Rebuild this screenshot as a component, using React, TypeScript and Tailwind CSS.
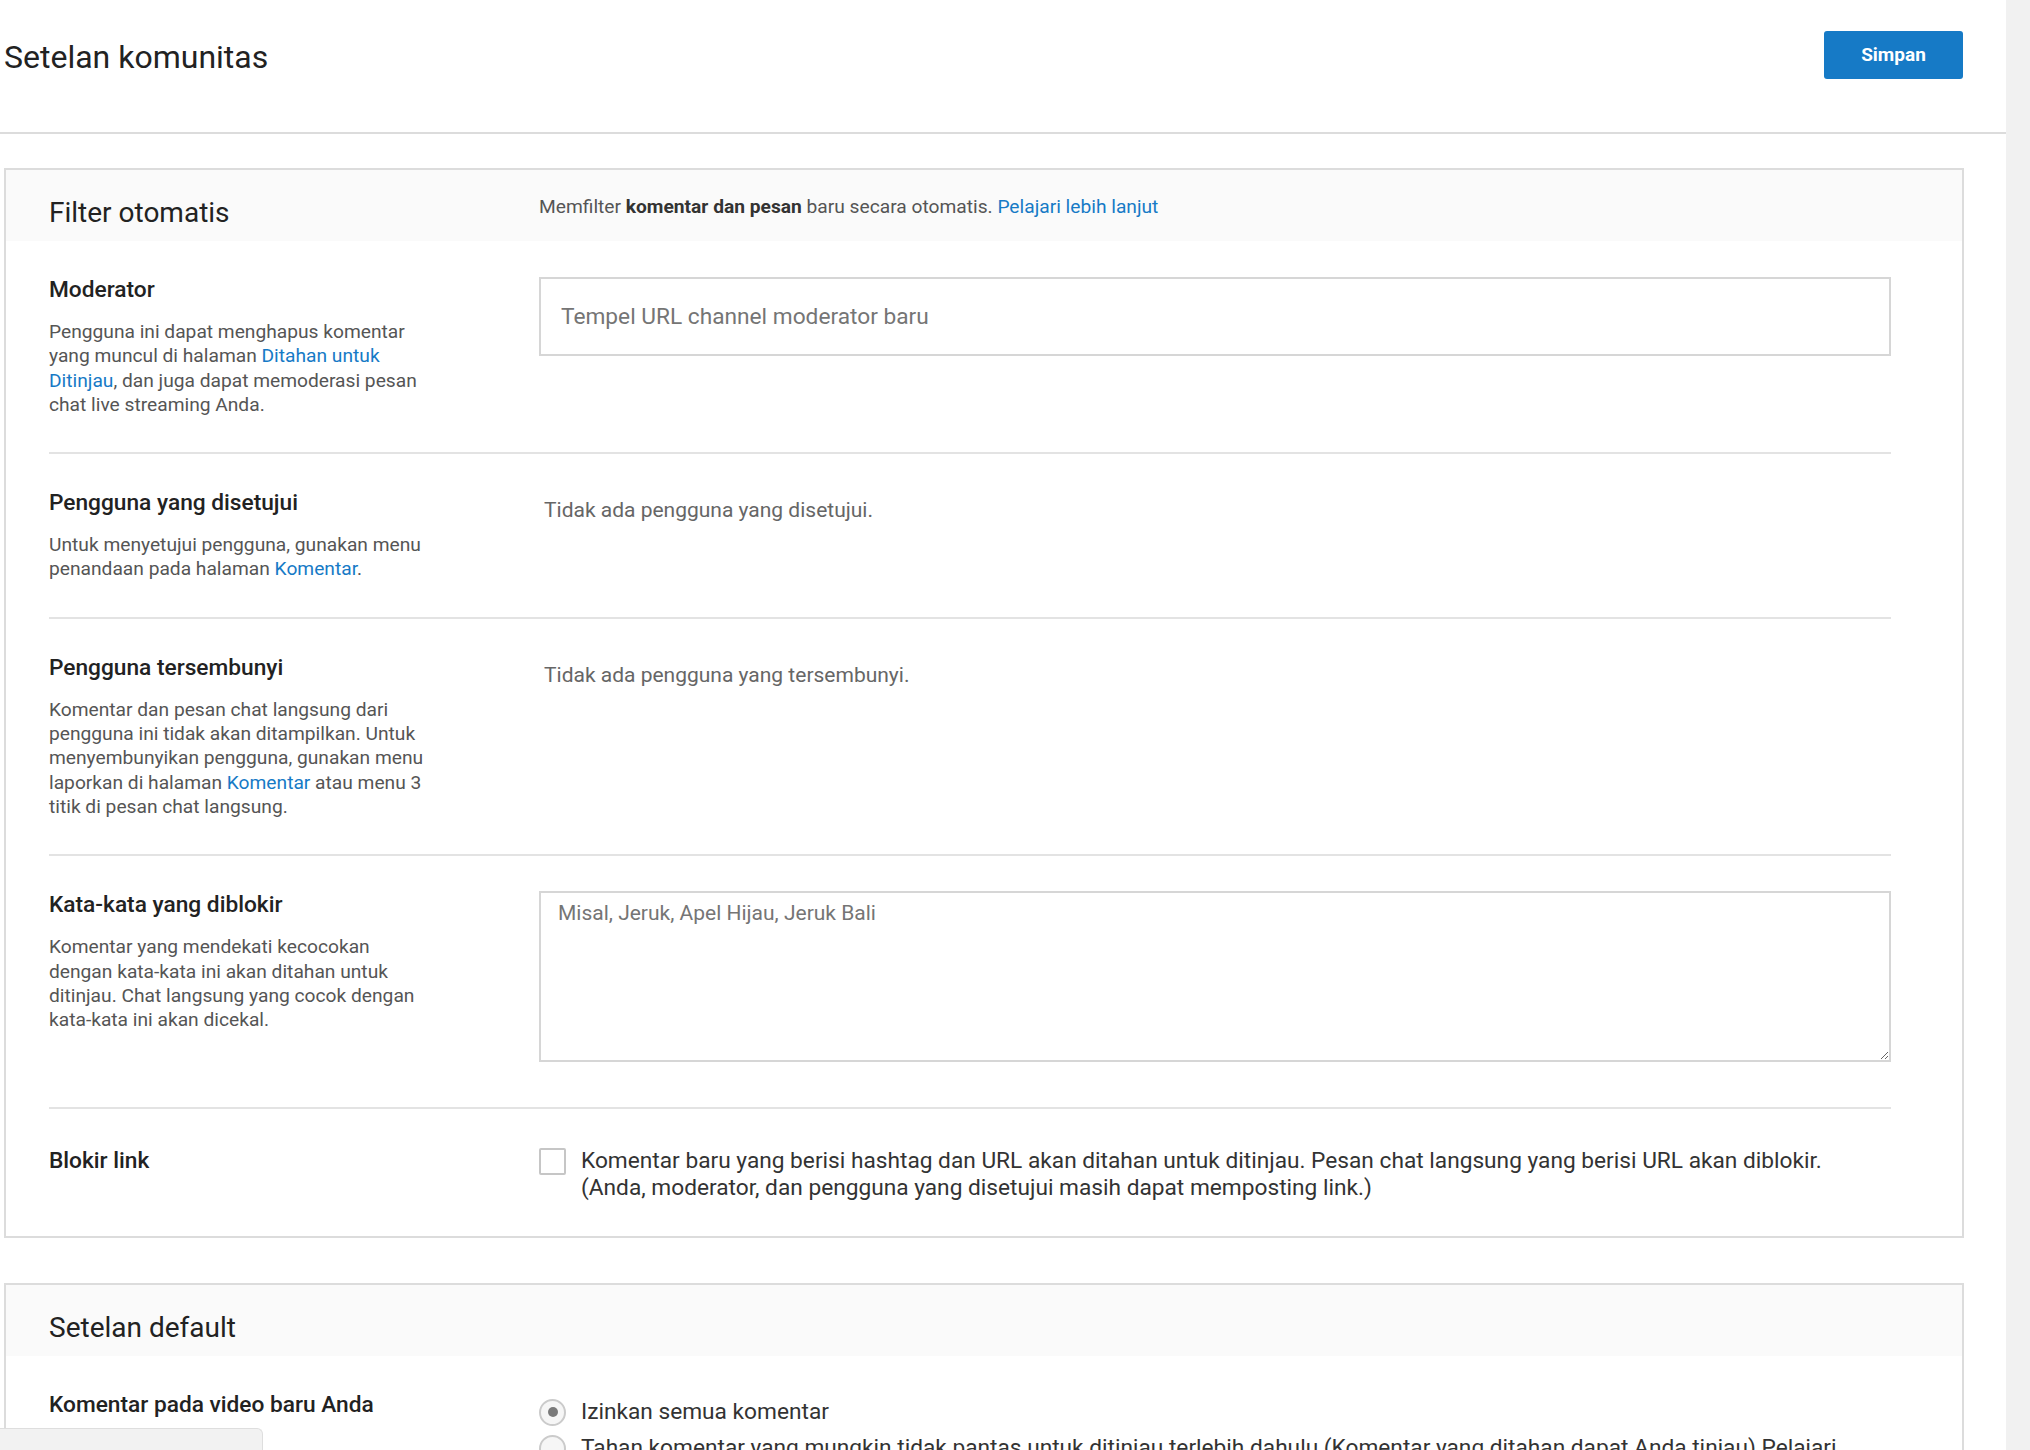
import type { ReactNode } from 'react';
import clsx from 'clsx';

type SettingRowProps = {
  label: string;
  description?: ReactNode;
  children?: ReactNode;
  last?: boolean;
};

function TextLink({ children }: { children: ReactNode }) {
  return (
    <a className="text-[#167ac6]" href="#">
      {children}
    </a>
  );
}

function SettingRow({ label, description, children, last }: SettingRowProps) {
  return (
    <div
      className={clsx(
        'flex pb-[35px]',
        last ? 'pt-[38px]' : 'border-b-2 border-[#e3e3e3] pt-[35px]',
      )}
    >
      <div className="w-[490px] shrink-0">
        <h3 className="text-[22.7px] font-medium leading-[28px] text-[#222]">
          {label}
        </h3>
        {description ? (
          <p className="mt-4 w-[386px] text-[19.2px] leading-[24.3px] text-[#555]">
            {description}
          </p>
        ) : null}
      </div>
      <div className="min-w-0 flex-1">{children}</div>
    </div>
  );
}

function Card({
  title,
  note,
  children,
  className,
}: {
  title: string;
  note?: ReactNode;
  children: ReactNode;
  className?: string;
}) {
  return (
    <section className={clsx('w-[1960px] border-2 border-[#dcdcdc]', className)}>
      <div className="flex h-[71px] items-start bg-[#fafafa] pl-[43px] pt-[25px]">
        <h2 className="mt-[2px] w-[490px] shrink-0 text-[28px] leading-[32px] text-[#222]">
          {title}
        </h2>
        {note}
      </div>
      <div className="pl-[43px] pr-[71px]">{children}</div>
    </section>
  );
}

function Radio({ checked, children }: { checked?: boolean; children: ReactNode }) {
  return (
    <label className="flex items-center gap-[15px]">
      <span className="flex size-[27px] shrink-0 items-center justify-center rounded-full border-2 border-[#cbcbcb] bg-[#f6f6f6]">
        {checked ? <span className="size-[10px] rounded-full bg-[#7a7a7a]" /> : null}
      </span>
      <span className="whitespace-nowrap text-[22.7px] leading-[28px] text-[#333]">
        {children}
      </span>
    </label>
  );
}

export default function App() {
  return (
    <div className="flex h-screen overflow-hidden bg-white font-['Roboto','Liberation_Sans',sans-serif]">
      <main className="min-w-0 flex-1 overflow-hidden">
        <header className="flex h-[134px] items-start justify-between border-b-2 border-[#dcdcdc] pl-1 pr-[43px]">
          <h1 className="mt-[38px] text-[32px] leading-[38px] text-[#222]">
            Setelan komunitas
          </h1>
          <button
            className="mt-[31px] h-[48px] w-[139px] rounded-[3px] bg-[#167ac6] text-[19px] font-bold text-white"
            type="button"
          >
            Simpan
          </button>
        </header>

        <div className="pl-1">
          <Card
            className="mt-[34px]"
            note={
              <p className="text-[19.2px] leading-[24px] text-[#555]">
                Memfilter <b className="font-bold text-[#333]">komentar dan pesan</b>{' '}
                baru secara otomatis. <TextLink>Pelajari lebih lanjut</TextLink>
              </p>
            }
            title="Filter otomatis"
          >
            <SettingRow
              description={
                <>
                  Pengguna ini dapat menghapus komentar yang muncul di halaman{' '}
                  <TextLink>Ditahan untuk Ditinjau</TextLink>, dan juga dapat
                  memoderasi pesan chat live streaming Anda.
                </>
              }
              label="Moderator"
            >
              <input
                className="mt-[1px] block h-[79px] w-full border-2 border-[#d6d6d6] pl-[20px] text-[22.7px] text-[#333] outline-none placeholder:text-[#757575]"
                placeholder="Tempel URL channel moderator baru"
                type="text"
              />
            </SettingRow>

            <SettingRow
              description={
                <>
                  Untuk menyetujui pengguna, gunakan menu penandaan pada halaman{' '}
                  <TextLink>Komentar</TextLink>.
                </>
              }
              label="Pengguna yang disetujui"
            >
              <p className="mt-[7px] pl-[5px] text-[21px] leading-[28px] text-[#666]">
                Tidak ada pengguna yang disetujui.
              </p>
            </SettingRow>

            <SettingRow
              description={
                <>
                  Komentar dan pesan chat langsung dari pengguna ini tidak akan
                  ditampilkan. Untuk menyembunyikan pengguna, gunakan menu laporkan
                  di halaman <TextLink>Komentar</TextLink> atau menu 3 titik di pesan
                  chat langsung.
                </>
              }
              label="Pengguna tersembunyi"
            >
              <p className="mt-[7px] pl-[5px] text-[21px] leading-[28px] text-[#666]">
                Tidak ada pengguna yang tersembunyi.
              </p>
            </SettingRow>

            <SettingRow
              description="Komentar yang mendekati kecocokan dengan kata-kata ini akan ditahan untuk ditinjau. Chat langsung yang cocok dengan kata-kata ini akan dicekal."
              label="Kata-kata yang diblokir"
            >
              <textarea
                className="mb-[10px] block h-[171px] w-full border-2 border-[#d6d6d6] px-[17px] pt-[6px] text-[21px] leading-[28px] text-[#333] outline-none placeholder:text-[#757575]"
                placeholder="Misal, Jeruk, Apel Hijau, Jeruk Bali"
              />
            </SettingRow>

            <SettingRow label="Blokir link" last>
              <label className="flex items-start gap-[15px]">
                <span className="mt-[1px] size-[27px] shrink-0 rounded-[2px] border-2 border-[#c6c6c6] bg-white" />
                <span className="text-[22.7px] leading-[27px] text-[#333]">
                  Komentar baru yang berisi hashtag dan URL akan ditahan untuk
                  ditinjau. Pesan chat langsung yang berisi URL akan diblokir.
                  <br />
                  (Anda, moderator, dan pengguna yang disetujui masih dapat
                  memposting link.)
                </span>
              </label>
            </SettingRow>
          </Card>

          <Card className="mt-[45px]" title="Setelan default">
            <SettingRow label="Komentar pada video baru Anda">
              <div className="mt-[7px] flex flex-col gap-[8px]">
                <Radio checked>Izinkan semua komentar</Radio>
                <Radio>
                  Tahan komentar yang mungkin tidak pantas untuk ditinjau terlebih
                  dahulu (Komentar yang ditahan dapat Anda tinjau) Pelajari
                </Radio>
                <Radio>Tahan semua komentar untuk ditinjau</Radio>
              </div>
            </SettingRow>
          </Card>
        </div>
      </main>
      <div className="w-[24px] shrink-0 bg-[#f1f1f1]" />
      <div className="fixed bottom-0 left-0 h-[22px] w-[263px] rounded-tr-[6px] border-r border-t border-[#dedede] bg-[#f2f2f2]" />
    </div>
  );
}
